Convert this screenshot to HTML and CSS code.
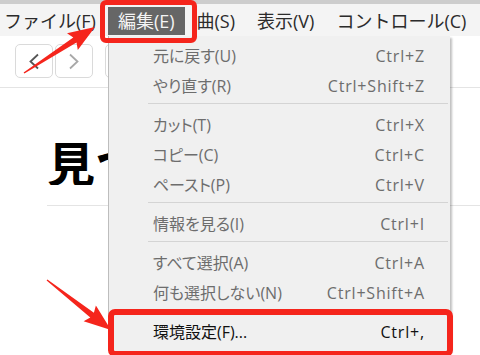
FILE: index.html
```html
<!DOCTYPE html>
<html lang="ja">
<head>
    <meta charset="UTF-8">
    <title>iTunes - 編集</title>
    <link rel="stylesheet" href="styles.css">
</head>
<body>
    <div id="title-strip"></div>

    <!-- Menu bar -->
    <div id="menubar">
        <span class="menu-item">ファイル(F)</span>
        <div class="menu-item is-open">
            編集(E)
            <!-- Edit dropdown -->
            <div id="edit-menu">
                <div class="entry"><span>元に戻す(U)</span><span class="keys">Ctrl+Z</span></div>
                <div class="entry"><span>やり直す(R)</span><span class="keys">Ctrl+Shift+Z</span></div>
                <div class="sep"></div>
                <div class="entry"><span>カット(T)</span><span class="keys">Ctrl+X</span></div>
                <div class="entry"><span>コピー(C)</span><span class="keys">Ctrl+C</span></div>
                <div class="entry"><span>ペースト(P)</span><span class="keys">Ctrl+V</span></div>
                <div class="sep"></div>
                <div class="entry"><span>情報を見る(I)</span><span class="keys">Ctrl+I</span></div>
                <div class="sep"></div>
                <div class="entry"><span>すべて選択(A)</span><span class="keys">Ctrl+A</span></div>
                <div class="entry"><span>何も選択しない(N)</span><span class="keys">Ctrl+Shift+A</span></div>
                <div class="sep"></div>
                <div class="entry is-marked"><span>環境設定(F)...</span><span class="keys">Ctrl+,</span></div>
            </div>
        </div>
        <span class="menu-item">曲(S)</span>
        <span class="menu-item">表示(V)</span>
        <span class="menu-item">コントロール(C)</span>
    </div>

    <!-- Toolbar -->
    <div id="toolbar">
        <button class="nav-btn">
            <svg width="14" height="17" viewBox="0 0 14 17"><path d="M11 1.5 L3.5 8.5 L11 15.5" fill="none" stroke="#555" stroke-width="1.8"/></svg>
        </button>
        <button class="nav-btn">
            <svg width="14" height="17" viewBox="0 0 14 17"><path d="M3 1.5 L10.5 8.5 L3 15.5" fill="none" stroke="#a8a8a8" stroke-width="1.8"/></svg>
        </button>
        <button class="nav-btn extra"></button>
    </div>

    <div id="content">
        <div class="page-head">
            <h1>見つける</h1>
        </div>
    </div>

    <!-- Annotation arrows -->
    <svg id="arrows" width="480" height="355" viewBox="0 0 480 355">
        <polygon points="24.4,73.6 76.5,42.6 77.8,50.1 95,27 67,33.3 73.3,37.6 23.6,72.4" fill="#f5251c"/>
        <polygon points="46.6,280.6 90.3,317.6 83.6,321.2 111,330 95.9,305.5 93.9,312.8 47.4,279.4" fill="#f5251c"/>
    </svg>
</body>
</html>
```

FILE: styles.css
```css
* {
    box-sizing: border-box;
    margin: 0;
    padding: 0;
}

html, body {
    width: 480px;
    height: 355px;
    overflow: hidden;
    background: #fff;
}

body {
    position: relative;
    font-family: "Open Sans", "Noto Sans CJK JP", sans-serif;
    color: #222;
}

#title-strip {
    height: 4px;
    background: #cdcdcd;
}

/* Menu bar */
#menubar {
    display: flex;
    align-items: flex-end;
    gap: 2px;
    height: 32px;
    padding-bottom: 1px;
    margin-left: -6px;
    background: #f4f4f4;
    font-size: 18px;
}

.menu-item {
    position: relative;
    height: 28px;
    line-height: 28px;
    padding: 0 10px;
    color: #2b2b2b;
    white-space: nowrap;
}

.menu-item.is-open {
    background: #666;
    color: #f4f4f4;
}

.menu-item.is-open::after {
    content: "";
    position: absolute;
    left: -8px;
    right: -12px;
    top: -7px;
    bottom: -8px;
    border: 5px solid #f5251c;
    border-radius: 6px;
    z-index: 6;
}

/* Edit dropdown */
#edit-menu {
    position: absolute;
    left: 0;
    top: 29px;
    width: 342px;
    padding: 5px 0 4px;
    background: #f0f0f0;
    border-left: 1px solid #bdbdbd;
    box-shadow: 2px 2px 2px rgba(0, 0, 0, 0.25);
    color: #6d6d6d;
    font-size: 16px;
    line-height: 30px;
    font-feature-settings: "palt";
    z-index: 5;
}

.entry {
    display: flex;
    justify-content: space-between;
    height: 30px;
    padding: 0 25px 0 44px;
}

.keys {
    font-family: "Open Sans", sans-serif;
    letter-spacing: 0.8px;
    font-feature-settings: normal;
}

.sep {
    height: 1px;
    margin: 2px 2px 6px 39px;
    background: #d4d4d4;
}

.entry.is-marked {
    position: relative;
    color: #111;
}

.entry.is-marked::after {
    content: "";
    position: absolute;
    left: -1px;
    right: -3px;
    top: -8px;
    bottom: -10px;
    border: 6px solid #f5251c;
    border-radius: 7px;
}

/* Toolbar */
#toolbar {
    display: flex;
    gap: 2px;
    height: 52px;
    padding: 8px 0 0 15px;
    border-bottom: 1px solid #e4e4e4;
}

.nav-btn {
    display: flex;
    align-items: center;
    justify-content: center;
    width: 38px;
    height: 34px;
    background: #fff;
    border: 1px solid #dadada;
    border-radius: 5px;
}

.nav-btn.extra {
    margin-left: 10px;
}

/* Page content */
#content {
    padding: 49px 0 0 47px;
}

.page-head {
    padding-bottom: 20px;
    border-bottom: 1px solid #e4e4e4;
}

/* the rest of the title sits under the open menu */
.page-head h1 {
    width: 61px;
    overflow: hidden;
    font-family: "Noto Sans CJK JP", sans-serif;
    font-size: 48px;
    line-height: 48px;
    font-weight: 700;
    color: #000;
    white-space: nowrap;
}

#arrows {
    position: absolute;
    top: 0;
    left: 0;
    pointer-events: none;
    z-index: 10;
}
```
